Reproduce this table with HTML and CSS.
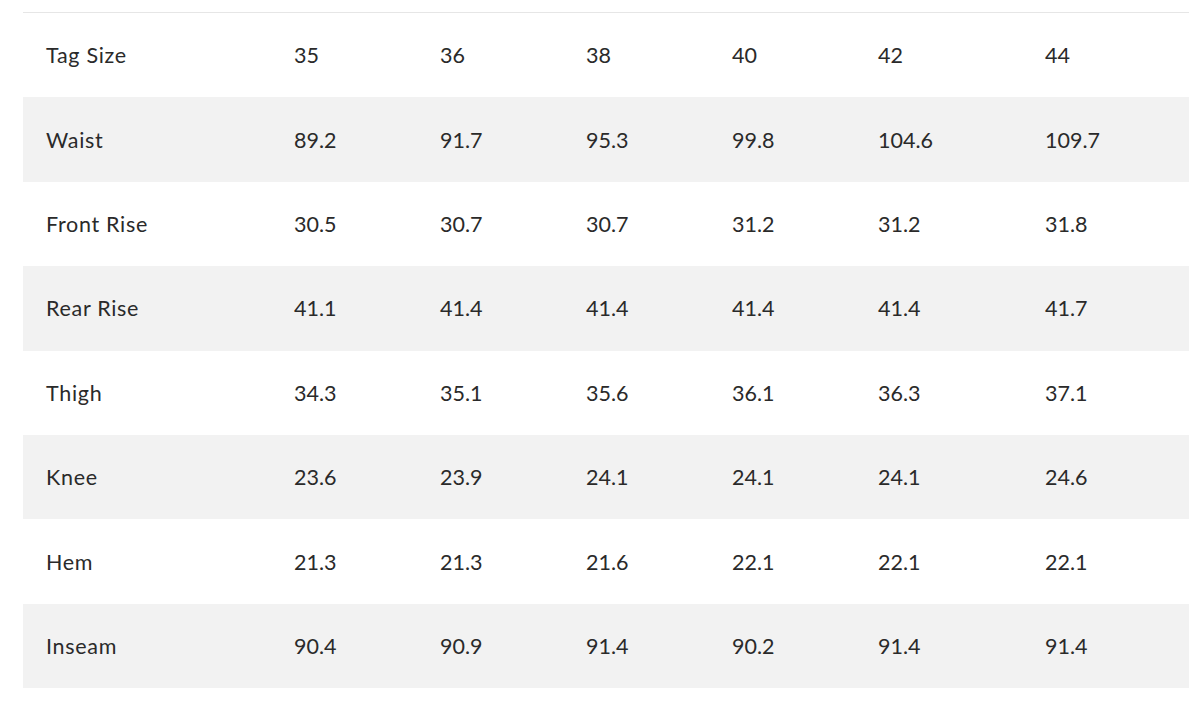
FILE: index.html
```html
<!DOCTYPE html>
<html>
<head>
<meta charset="utf-8">
<link rel="stylesheet" href="styles.css">
</head>
<body>
<table class="size-table">
  <colgroup>
    <col class="c-label"><col class="c-n"><col class="c-n"><col class="c-n"><col class="c-n"><col class="c-w"><col class="c-w">
  </colgroup>
  <tbody>
    <tr><td>Tag Size</td><td>35</td><td>36</td><td>38</td><td>40</td><td>42</td><td>44</td></tr>
    <tr class="alt"><td>Waist</td><td>89.2</td><td>91.7</td><td>95.3</td><td>99.8</td><td>104.6</td><td>109.7</td></tr>
    <tr><td>Front Rise</td><td>30.5</td><td>30.7</td><td>30.7</td><td>31.2</td><td>31.2</td><td>31.8</td></tr>
    <tr class="alt"><td>Rear Rise</td><td>41.1</td><td>41.4</td><td>41.4</td><td>41.4</td><td>41.4</td><td>41.7</td></tr>
    <tr><td>Thigh</td><td>34.3</td><td>35.1</td><td>35.6</td><td>36.1</td><td>36.3</td><td>37.1</td></tr>
    <tr class="alt"><td>Knee</td><td>23.6</td><td>23.9</td><td>24.1</td><td>24.1</td><td>24.1</td><td>24.6</td></tr>
    <tr><td>Hem</td><td>21.3</td><td>21.3</td><td>21.6</td><td>22.1</td><td>22.1</td><td>22.1</td></tr>
    <tr class="alt"><td>Inseam</td><td>90.4</td><td>90.9</td><td>91.4</td><td>90.2</td><td>91.4</td><td>91.4</td></tr>
  </tbody>
</table>
</body>
</html>
```
FILE: styles.css
```css
html, body {
  margin: 0;
  padding: 0;
  background: #ffffff;
}
body {
  padding: 12px 0 0 23px;
  font-family: "Lato", "Liberation Sans", sans-serif;
  color: #2a2a2a;
}
.size-table {
  width: 1166px;
  border-collapse: collapse;
  table-layout: fixed;
  border-top: 1px solid #e6e6e6;
}
.c-label { width: 248px; }
.c-n { width: 146px; }
.c-w { width: 167px; }
.size-table td {
  height: 84.4px;
  padding: 0 0 0 23px;
  font-size: 21.5px;
  line-height: 24px;
  vertical-align: middle;
  text-align: left;
}
.size-table td:first-child {
  letter-spacing: 0.7px;
}
.size-table tr.alt td {
  background: #f2f2f2;
}
```
